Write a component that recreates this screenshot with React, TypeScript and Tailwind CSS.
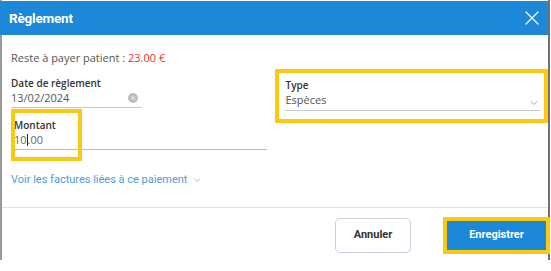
import { X, ChevronDown } from "lucide-react";

const App = () => {
  return (
    <div className="w-[551px] h-[271px] bg-white overflow-hidden">
      <div className="w-[550px] h-[260px] flex flex-col border-l-2 border-r-2 border-l-[#9a9a9a] border-r-[#707070]">
        <div className="h-[34px] mt-[1px] bg-[#1e88d8] flex items-center justify-between pl-[9px] pr-[4px] -ml-[2px]">
          <h2 className="text-white font-bold text-[13.5px] font-['Roboto',sans-serif] tracking-[-0.2px]">Règlement</h2>
          <X className="w-[24px] h-[24px] text-white/90" strokeWidth={1.4} />
        </div>

        <div className="flex-1 flex flex-col font-['Open_Sans',sans-serif]">
          <p className="mt-[15px] ml-[9px] text-[11px] text-[#555]">
            Reste à payer patient : <span className="text-[#f02c2c]">23.00 €</span>
          </p>

          <div className="flex mt-[3px]">
            <div className="w-[272px] flex flex-col">
              <div className="ml-[9px] pt-[7px] w-[131px]">
                <div className="text-[10px] font-semibold text-[#333] leading-[13px]">Date de règlement</div>
                <div className="flex items-center justify-between h-[18px] border-b border-[#c8c8c8]">
                  <span className="text-[11px] text-[#555]">13/02/2024</span>
                  <span className="w-[10px] h-[10px] rounded-full bg-[#bdbdbd] flex items-center justify-center mr-[4px]">
                    <X className="w-[6px] h-[6px] text-white" strokeWidth={3} />
                  </span>
                </div>
              </div>
              <div className="relative ml-[9px] mt-[2px] w-[256px]">
                <div className="absolute left-0 -top-[1px] w-[71px] h-[52px] border-[4px] border-[#fcc810]" />
                <div className="pl-[3px] pt-[9px]">
                  <div className="text-[10px] font-semibold text-[#333] leading-[13px]">Montant</div>
                  <div className="h-[18px] flex items-center border-b border-[#8fc7ef] text-[11px] text-[#666]">
                    10<span className="w-px h-[12px] bg-[#222]" />.00
                  </div>
                </div>
              </div>
            </div>

            <div className="w-[273px] h-[54px] border-[4px] border-[#fcc810] pl-[6px] pr-[4px] pt-[6px] ml-[2px] -mt-[1px]">
              <div className="text-[10px] font-semibold text-[#333] leading-[13px]">Type</div>
              <div className="flex items-center justify-between h-[19px] border-b border-[#c8c8c8]">
                <span className="text-[11px] text-[#555]">Espèces</span>
                <ChevronDown className="w-[12px] h-[12px] text-[#888] mt-[4px]" strokeWidth={1.5} />
              </div>
            </div>
          </div>

          <div className="mt-[22px] ml-[9px] flex items-center gap-[4px] text-[11px] text-[#4a9de0] font-['Roboto',sans-serif]">
            Voir les factures liées à ce paiement
            <ChevronDown className="w-[12px] h-[12px] text-[#7ab4e6]" strokeWidth={1.5} />
          </div>

          <div className="mt-[19px] h-px bg-[#e2e2e2]" />

          <div className="flex justify-end items-center gap-[32px] pt-[9px] font-['Roboto',sans-serif]">
            <button className="w-[76px] h-[35px] rounded-[5px] border border-[#cfcde0] text-[11px] font-bold text-[#333]">
              Annuler
            </button>
            <div className="border-[4px] border-[#fcc810] -mr-[2px]">
              <button className="w-[99px] h-[29px] bg-[#1e88d8] text-white text-[11px] font-bold">
                Enregistrer
              </button>
            </div>
          </div>
        </div>
      </div>
    </div>
  );
};

export default App;
